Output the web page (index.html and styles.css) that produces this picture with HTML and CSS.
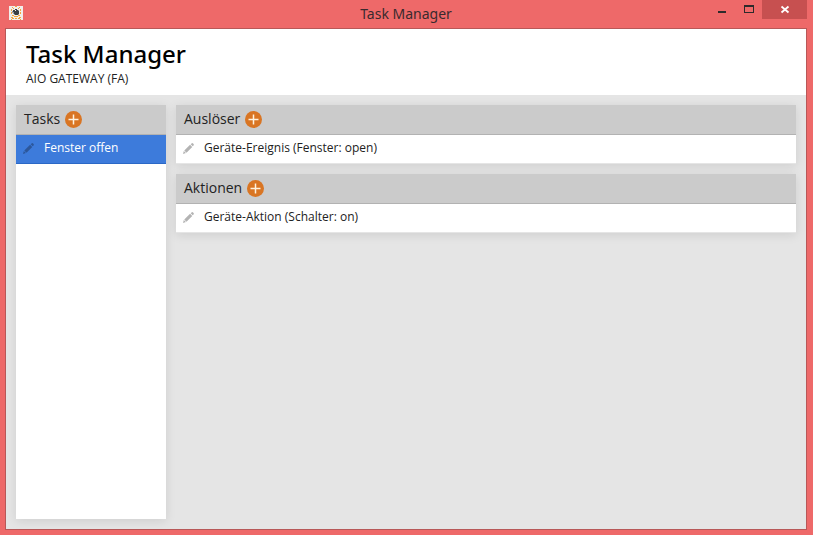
FILE: index.html
```html
<!DOCTYPE html>
<html lang="de">
<head>
<meta charset="utf-8">
<title>Task Manager</title>
<link rel="stylesheet" href="styles.css">
</head>
<body>
<svg class="sprites" aria-hidden="true">
  <symbol id="pencil" viewBox="0 0 12 12">
    <path d="M8.4 1.4 9.3.5Q10.2-.3 11 .5L11.5 1Q12.2 1.8 11.5 2.6L10.6 3.6ZM7.7 2 10.1 4.3 3.8 10.5 1.4 8.1ZM.9 8.7 3.2 11 0 12Z"/>
  </symbol>
  <symbol id="plus" viewBox="0 0 17 17">
    <circle cx="8.5" cy="8.5" r="8.5" fill="#d97523"/>
    <path d="M8.5 3.5v10M3.5 8.5h10" stroke="#fff3df" stroke-width="1.5"/>
  </symbol>
</svg>
<div class="window">
  <div class="titlebar">
    <svg class="app-icon" viewBox="0 0 14 14" aria-hidden="true">
      <path fill="#f1eeeb" d="M0 0h14v14H0z"/>
      <path fill="#f5a33c" d="M6 0h2v1H6zM3 1h1v1H3zM10 1h1v1h-1zM4 2h1v1H4zM9 2h1v1H9zM2 3h1v2H2zM11 3h1v2h-1zM2 6h1v2H2zM11 6h1v2h-1zM3 9h2v1H3zM9 9h2v1H9zM5 10h4v1H5zM2 11h2v1H2zM10 11h2v1h-2zM3 12h2v1H3zM6 12h2v1H6zM9 12h2v1H9zM2 13h1v1H2zM11 13h1v1h-1z"/>
      <path fill="#3b3e42" d="M6 3h2v1H6zM4 4h2v2H4zM7 4h2v1H7zM5 5h5v3H5zM6 8h3v1H6z"/>
      <path fill="#9a9b9d" d="M3 5h1v2H3zM4 6h1v2H4zM9 4h1v1H9zM5 8h1v1H5zM9 8h1v1H9z"/>
    </svg>
    <span class="caption">Task Manager</span>
    <div class="controls">
      <button class="control" aria-label="Minimieren"><svg viewBox="0 0 10 10"><path fill="#2d2a2b" d="M1 7h8v2H1z"/></svg></button>
      <button class="control" aria-label="Maximieren"><svg viewBox="0 0 10 10"><path fill="#2d2a2b" fill-rule="evenodd" d="M0 1h10v8H0zM1 3v5h8V3z"/></svg></button>
      <button class="control close" aria-label="Schließen"><svg viewBox="0 0 10 10"><path fill="none" stroke="#fff" stroke-width="1.8" d="M1.5 1.5 8.5 7.5M8.5 1.5 1.5 7.5"/></svg></button>
    </div>
  </div>
  <div class="client">
    <header class="page-header">
      <h1>Task Manager</h1>
      <p>AIO GATEWAY (FA)</p>
    </header>
    <div class="content">
      <section class="panel sidebar">
        <div class="panel-head"><h2>Tasks</h2><button class="add" aria-label="Task hinzufügen"><svg><use href="#plus"/></svg></button></div>
        <button class="row selected"><svg><use href="#pencil"/></svg><span>Fenster offen</span></button>
      </section>
      <main class="details">
        <section class="panel">
          <div class="panel-head"><h2>Auslöser</h2><button class="add" aria-label="Auslöser hinzufügen"><svg><use href="#plus"/></svg></button></div>
          <button class="row"><svg><use href="#pencil"/></svg><span>Geräte-Ereignis (Fenster: open)</span></button>
        </section>
        <section class="panel">
          <div class="panel-head"><h2>Aktionen</h2><button class="add" aria-label="Aktion hinzufügen"><svg><use href="#plus"/></svg></button></div>
          <button class="row"><svg><use href="#pencil"/></svg><span>Geräte-Aktion (Schalter: on)</span></button>
        </section>
      </main>
    </div>
  </div>
</div>
</body>
</html>
```
FILE: styles.css
```css
* { box-sizing: border-box; }

body, h1, h2, p { margin: 0; }

body {
  font-family: "Open Sans", "Noto Sans", sans-serif;
  color: #222;
}

button {
  border: 0;
  padding: 0;
  background: none;
  font: inherit;
  color: inherit;
}

.sprites { position: absolute; width: 0; height: 0; }

.window {
  display: flex;
  flex-direction: column;
  min-height: 100vh;
  padding: 0 6px 5px 5px;
  background: #ee6969;
}

.titlebar {
  display: grid;
  grid-template-columns: 1fr auto 1fr;
  height: 28px;
}

.app-icon {
  width: 14px;
  height: 14px;
  margin: 6px 4px;
}

.caption {
  font: 14px/27px "Noto Sans", sans-serif;
  color: #3a2a2e;
}

.controls {
  display: flex;
  justify-content: flex-end;
  align-items: flex-start;
}

.control {
  display: flex;
  align-items: center;
  justify-content: center;
  width: 27px;
  height: 18px;
}

.control svg { width: 10px; height: 10px; }

.close {
  width: 45px;
  height: 19px;
  background: #c75050;
}

.client {
  flex: 1;
  display: flex;
  flex-direction: column;
  border: 1px solid #b85858;
  background: #e5e5e5;
}

.page-header {
  padding: 8px 20px;
  background: #fff;
}

h1 {
  font-family: "Noto Sans", "Open Sans", sans-serif;
  font-size: 24px;
  font-weight: 500;
  line-height: 34px;
  color: #000;
}

.page-header p {
  font-size: 12px;
  line-height: 16px;
}

.content {
  flex: 1;
  display: flex;
  gap: 10px;
  padding: 10px;
}

.panel {
  background: #fff;
  box-shadow: 0 2px 10px rgba(0, 0, 0, 0.1);
}

.sidebar { width: 150px; }

.details {
  flex: 1;
  display: flex;
  flex-direction: column;
  gap: 10px;
}

.panel-head {
  display: flex;
  align-items: center;
  gap: 5px;
  height: 30px;
  padding: 0 8px;
  background: #cbcbcb;
  border-bottom: 1px solid #b2b2b2;
}

h2 {
  padding-bottom: 2px;
  font-size: 14px;
  font-weight: 400;
  line-height: 26px;
}

.add, .add svg {
  display: block;
  width: 17px;
  height: 17px;
}

.row {
  display: flex;
  align-items: center;
  gap: 10px;
  width: 100%;
  height: 29px;
  padding: 0 7px 2px;
  border-bottom: 1px solid #e5e5e5;
  font-size: 12px;
  text-align: left;
}

.row span { padding-bottom: 2px; }

.row svg {
  width: 11px;
  height: 11px;
  fill: #b3b3b3;
}

.selected {
  background: #3d7bdb;
  border-color: #2b68c6;
  color: #fff;
}

.selected svg { fill: #2c579b; }
```
